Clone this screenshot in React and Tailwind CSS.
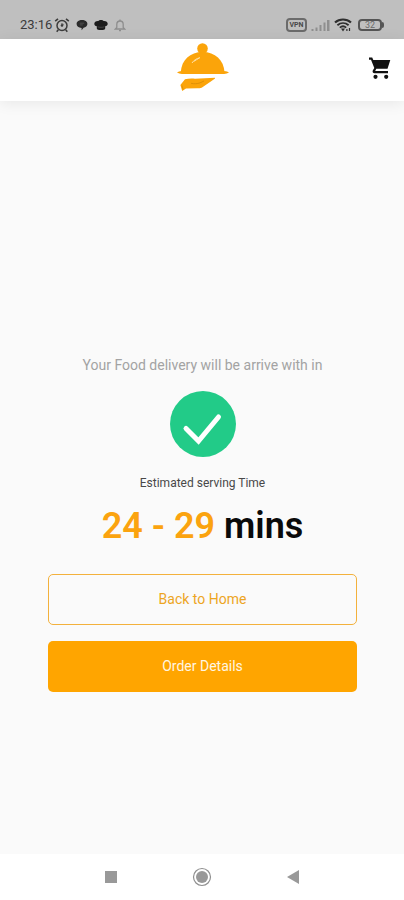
function AlarmIcon() {
  return (
    <svg viewBox="0 0 16 16" className="size-4" fill="none" stroke="#3c3c3c" aria-hidden="true">
      <circle cx="8" cy="8.5" r="5" strokeWidth="1.5" />
      <circle cx="8" cy="8.5" r="1.3" fill="#3c3c3c" stroke="none" />
      <path d="M8 6v2.5l1.6-1.2" strokeWidth="0.9" />
      <path d="M1.2 4.2 4 1.9M14.8 4.2 12 1.9M4.3 12.8l-1.6 1.9M11.7 12.8l1.6 1.9" strokeWidth="1.6" />
    </svg>
  )
}

function ChatIcon() {
  return (
    <svg viewBox="0 0 12 12" className="size-3" fill="#2b2b2b" aria-hidden="true">
      <path d="M6 1c3.200 0 5.400 1.600 5.400 3.900 0 2-1.700 3.300-3.800 3.800L5.600 11.200V8.900C2.500 8.600.6 7.100.6 4.900.6 2.600 2.800 1 6 1z" />
      <path d="M3.800 4.200h4.400M3.800 5.900h3" stroke="#666" strokeWidth="0.6" />
    </svg>
  )
}

function CapIcon() {
  return (
    <svg viewBox="0 0 14 12" className="h-3 w-3.5" fill="#1c1c1c" aria-hidden="true">
      <path d="M7 1c1.300 0 2.200.5 2.800 1.100C12.200 2 13.700 3.200 13.700 4.800c0 1.400-1 2.200-2.500 2.400v2.400c0 1-1.900 1.500-4.200 1.500s-4.200-.5-4.200-1.500V7.200C1.300 7 .3 6.200.3 4.800.3 3.200 1.800 2 4.200 2.100 4.800 1.500 5.700 1 7 1z" />
      <path d="M3.600 7.800c2 .7 4.800.7 6.800 0" fill="none" stroke="#666" strokeWidth="0.5" />
    </svg>
  )
}

function BellIcon() {
  return (
    <svg viewBox="0 0 12 14" className="h-3.5 w-3" fill="none" stroke="#8e8e8e" strokeWidth="1.3" aria-hidden="true">
      <path d="M2.800 9.500V6.200a3.200 3.200 0 0 1 6.400 0v3.300l1.500 1.500H1.300z" />
      <path d="M6 1.500v1.500M5 12.500h2" />
    </svg>
  )
}

function SignalIcon() {
  return (
    <svg viewBox="0 0 19 13" className="h-[13px] w-[19px]" fill="#8f8f8f" aria-hidden="true">
      <rect x="0.5" y="10" width="2" height="2" />
      <rect x="4.5" y="8.5" width="2" height="3.5" />
      <rect x="8.5" y="6" width="2" height="6" />
      <rect x="12.5" y="3.5" width="2" height="8.5" />
      <rect x="16" y="1" width="2.5" height="11" />
    </svg>
  )
}

function WifiIcon() {
  return (
    <svg viewBox="0 0 18 14" className="h-3.5 w-[18px]" fill="none" stroke="#2e2e2e" aria-hidden="true">
      <path d="M1 4.500c4.600-4 11.400-4 16 0" strokeWidth="2.200" />
      <path d="M3.400 7.200c3.300-2.800 7.900-2.800 11.200 0" strokeWidth="1.900" />
      <path d="M5.800 9.600c1.900-1.600 4.500-1.600 6.400 0" strokeWidth="1.700" />
      <path d="M7 10.600h4L9 13.600z" fill="#2e2e2e" stroke="none" />
      <path d="M12.900 13v-2M15.500 10v3" strokeWidth="1.200" />
    </svg>
  )
}

function CartIcon() {
  return (
    <svg viewBox="0 0 24 24" className="size-6" fill="#111" aria-hidden="true">
      <path d="M1 1.500h3.200L5.300 4H22.300L19.500 12.800H8.300L7.200 15H20v2.300H6.600c-1.800 0-2.500-1.500-1.700-3l1.400-2.300L3 3.700H1z" />
      <circle cx="7.500" cy="20.800" r="2.100" />
      <circle cx="18.200" cy="20.800" r="2.100" />
    </svg>
  )
}

function StatusBar() {
  return (
    <div className="flex h-[39px] items-end justify-between bg-[#bfbfbf] px-5 pb-1.5">
      <div className="flex h-4 items-center">
        <span className="mr-0.5 text-[13px] leading-4 text-[#3a3a3a]">23:16</span>
        <AlarmIcon />
        <span className="ml-1.5 flex items-center gap-1.5">
          <ChatIcon />
          <CapIcon />
          <BellIcon />
        </span>
      </div>
      <div className="flex h-4 items-center gap-1">
        <span className="flex h-3.5 w-[21px] items-center justify-center rounded-[4px] border-2 border-[#6b6b6b] text-[7px] leading-none font-bold text-[#4a4a4a]">
          VPN
        </span>
        <SignalIcon />
        <WifiIcon />
        <span className="ml-0.5 flex items-center">
          <span className="flex h-3 w-6 items-center justify-center rounded-[4px] border-2 border-[#555] text-[9px] leading-none text-[#6b6b6b]">
            32
          </span>
          <span className="h-1.5 w-0.5 rounded-r-sm bg-[#555]" />
        </span>
      </div>
    </div>
  )
}

function Logo() {
  return (
    <svg viewBox="0 0 52 50" className="h-[50px] w-[52px]" fill="#fba40a" role="img" aria-label="Food delivery">
      <circle cx="25.5" cy="5.5" r="5.300" />
      <path d="M3.800 29C4.500 17 13 9 25.600 9S46.700 17 47.500 29z" />
      <path d="M0 29.300c2-.9 4-1.300 6-1.300h40c2 0 4 .4 6 1.300-1.500 1.200-3 1.700-5 1.700H5c-2 0-3.500-.5-5-1.700z" />
      <path d="M15 20c1.600-2.600 4.400-4.500 7.800-5.300-2 1.600-4.300 2.300-6 3.700" fill="none" stroke="#ffe0a3" strokeWidth="1" />
      <path d="M3.400 42 8 36.300c3-.8 6.500-.8 10-.6l19.800-.9c.6.300.2.900-.4 1.300l-12 8.200c-1.300.9-3 1-5 .9l-11.400.4L5.200 48z" />
      <path d="M14 40.300c3 .8 6 .5 9-.4l4-1.900" fill="none" stroke="#d78a05" strokeWidth="0.8" />
      <path d="M5 42.500 6 46.500" fill="none" stroke="#d78a05" strokeWidth="0.7" />
    </svg>
  )
}

function Header() {
  return (
    <header className="z-10 flex h-[62px] items-center bg-white pr-3 pb-1 pl-3.5 shadow-[0_2px_14px_rgba(0,0,0,0.08)]">
      <span className="flex-1" />
      <Logo />
      <div className="flex flex-1 justify-end">
        <button type="button" aria-label="Cart">
          <CartIcon />
        </button>
      </div>
    </header>
  )
}

function DeliveryStatus() {
  return (
    <main className="flex flex-1 flex-col items-center justify-center bg-[#fafafa] pt-[91px] pr-[47px] pl-12">
      <p className="text-sm leading-5 text-[#a3a3a3]">Your Food delivery will be arrive with in</p>
      <svg viewBox="0 0 66 66" className="mt-4 size-[66px]" role="img" aria-label="Confirmed">
        <circle cx="33" cy="33" r="33" fill="#22cb88" />
        <path
          d="M16 37.500 28.500 50 48.500 26"
          fill="none"
          stroke="#fff"
          strokeWidth="5"
          strokeLinecap="round"
          strokeLinejoin="miter"
        />
      </svg>
      <p className="mt-4 text-xs leading-5 text-[#484848]">Estimated serving Time</p>
      <h1 className="mt-[13px] text-4xl leading-10 font-semibold text-[#0a0a0a]">
        <span className="text-[#fba30f]">24 - 29</span> mins
      </h1>
      <div className="mt-7 flex w-full flex-col gap-4">
        <button type="button" className="h-[51px] rounded-[5px] border border-[#f3b13c] text-sm text-[#eda51f]">
          Back to Home
        </button>
        <button type="button" className="h-[51px] rounded-[5px] bg-[#ffa500] text-sm text-[#fff6e2]">
          Order Details
        </button>
      </div>
    </main>
  )
}

function SystemNav() {
  return (
    <nav className="flex h-[46px] items-center justify-center gap-[71px] bg-white" aria-label="System">
      <button type="button" aria-label="Recent apps" className="flex size-5 items-center justify-center">
        <span className="size-3 bg-[#999]" />
      </button>
      <button type="button" aria-label="Home" className="flex size-5 items-center justify-center">
        <svg viewBox="0 0 20 20" className="size-5">
          <circle cx="10" cy="10" r="8.5" fill="none" stroke="#8f8f8f" strokeWidth="1.2" />
          <circle cx="10" cy="10" r="6" fill="#999" />
        </svg>
      </button>
      <button type="button" aria-label="Back" className="flex size-5 items-center justify-center">
        <svg viewBox="0 0 12 14" className="h-3.5 w-3" fill="#999">
          <path d="M0 7 12 0v14z" />
        </svg>
      </button>
    </nav>
  )
}

export default function App() {
  return (
    <div className="flex min-h-screen flex-col bg-[#fafafa] font-[Roboto,sans-serif]">
      <StatusBar />
      <Header />
      <DeliveryStatus />
      <SystemNav />
    </div>
  )
}
